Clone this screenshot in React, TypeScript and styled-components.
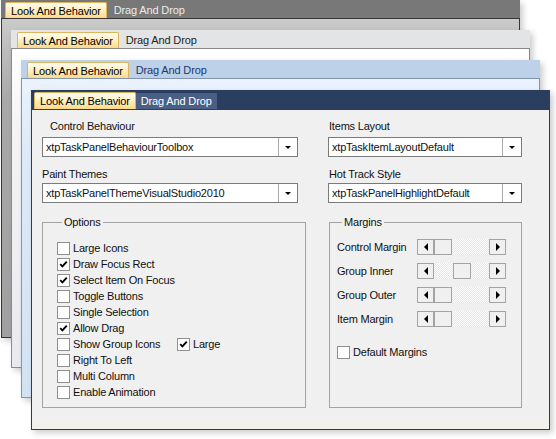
import React from "react";
import styled, { createGlobalStyle } from "styled-components";

type Skin = "graphite" | "silver" | "azure" | "navy";

const skins: Record<
  Skin,
  {
    strip: string;
    stripH: number;
    inset: number;
    tabH: number;
    idle: string;
    idleBg: string;
    idlePad: number;
    frame: string;
    top: string;
    body: string;
  }
> = {
  graphite: {
    strip: "#787878",
    stripH: 18,
    inset: 4,
    tabH: 16,
    idle: "#ececec",
    idleBg: "transparent",
    idlePad: 7,
    frame: "#363636",
    top: "#363636",
    body: "linear-gradient(180deg, #cacaca 0px, #a9a9a9 80px, #a0a0a0 100%)",
  },
  silver: {
    strip: "#e3e4e6",
    stripH: 18,
    inset: 6,
    tabH: 16,
    idle: "#1e1e1e",
    idleBg: "transparent",
    idlePad: 7,
    frame: "#8a8a8a",
    top: "#8a8a8a",
    body: "linear-gradient(180deg, #ffffff 0px, #f3f4f6 80px, #e8eaed 100%)",
  },
  azure: {
    strip: "#bdd1e9",
    stripH: 18,
    inset: 6,
    tabH: 16,
    idle: "#1b3a6a",
    idleBg: "transparent",
    idlePad: 7,
    frame: "#8195b1",
    top: "#8195b1",
    body: "linear-gradient(180deg, #eaf3fd 0px, #dde9f7 80px, #d3e2f3 100%)",
  },
  navy: {
    strip: "#2a3e60",
    stripH: 19,
    inset: 3,
    tabH: 17,
    idle: "#ffffff",
    idleBg: "#4a5f83",
    idlePad: 5,
    frame: "#3a3a3a",
    top: "#2a3e60",
    body: "linear-gradient(180deg, #f0f0f0 0px, #f0f0f0 308px, #f3f1e8 100%)",
  },
};

const GlobalStyle = createGlobalStyle`
  html, body {
    margin: 0;
    padding: 0;
    background: #ffffff;
  }
  body {
    font-family: "Liberation Sans", Arial, sans-serif;
    font-size: 11px;
    color: #111111;
  }
  * {
    box-sizing: border-box;
  }
`;

const Desktop = styled.div`
  position: relative;
  width: 556px;
  height: 439px;
  overflow: hidden;
  background: #ffffff;
`;

const Window = styled.section<{ $x: number; $y: number; $h: number }>`
  position: absolute;
  left: ${(p) => p.$x}px;
  top: ${(p) => p.$y}px;
  width: 519px;
  height: ${(p) => p.$h}px;
  display: flex;
  flex-direction: column;
  box-shadow: 3px 3px 6px rgba(0, 0, 0, 0.2);
`;

const TabStrip = styled.div<{ $skin: Skin }>`
  display: flex;
  align-items: flex-end;
  height: ${(p) => skins[p.$skin].stripH}px;
  padding-left: ${(p) => skins[p.$skin].inset}px;
  background: ${(p) => skins[p.$skin].strip};
`;

const Tab = styled.div<{ $skin: Skin; $active?: boolean }>`
  height: ${(p) => (p.$active ? skins[p.$skin].tabH : 16)}px;
  line-height: ${(p) => (p.$active ? skins[p.$skin].tabH : 16)}px;
  padding: 0 ${(p) => (p.$active ? 5 : skins[p.$skin].idlePad)}px;
  letter-spacing: -0.15px;
  white-space: nowrap;
  color: ${(p) => (p.$active ? "#000000" : skins[p.$skin].idle)};
  background: ${(p) =>
    p.$active
      ? "linear-gradient(180deg, #fffdf2 0%, #fff1c4 45%, #fdd98a 100%)"
      : skins[p.$skin].idleBg};
  border: ${(p) => (p.$active ? "1px solid #dcb55e" : "none")};
  border-bottom: none;
  border-radius: ${(p) => (p.$active ? "2px 2px 0 0" : "0")};
`;

const Body = styled.div<{ $skin: Skin }>`
  flex: 1;
  background: ${(p) => skins[p.$skin].body};
  border: 1px solid ${(p) => skins[p.$skin].frame};
  border-top-color: ${(p) => skins[p.$skin].top};
`;

const Panel = styled(Body)`
  display: grid;
  grid-template-columns: 264px 194px;
  column-gap: 22px;
  align-items: start;
  padding: 9px 0 0 10px;
`;

const Column = styled.div`
  display: flex;
  flex-direction: column;
`;

const FieldLabel = styled.div<{ $indent?: number; $above?: number; $below: number }>`
  height: 14px;
  line-height: 14px;
  padding-left: ${(p) => p.$indent ?? 0}px;
  margin-top: ${(p) => p.$above ?? 0}px;
  margin-bottom: ${(p) => p.$below}px;
  letter-spacing: -0.2px;
  white-space: nowrap;
`;

const Combo = styled.div<{ $width: number }>`
  display: flex;
  width: ${(p) => p.$width}px;
  height: 20px;
  border: 1px solid #7b7b7b;
  background: #ffffff;
`;

const ComboText = styled.div`
  flex: 1;
  padding-left: 3px;
  line-height: 18px;
  letter-spacing: -0.2px;
  white-space: nowrap;
  overflow: hidden;
`;

const ComboButton = styled.div`
  width: 19px;
  border-left: 1px solid #a9a9a9;
  display: flex;
  align-items: center;
  justify-content: center;

  &::after {
    content: "";
    border-left: 3px solid transparent;
    border-right: 3px solid transparent;
    border-top: 3px solid #000000;
  }
`;

const GroupBox = styled.fieldset<{ $width: number; $shift?: number; $padTop: number; $padLeft: number }>`
  width: ${(p) => p.$width}px;
  height: 193px;
  margin: 12px 0 0 ${(p) => p.$shift ?? 0}px;
  padding: ${(p) => p.$padTop}px 0 0 ${(p) => p.$padLeft}px;
  border: 1px solid #a3a3a3;
  min-width: 0;
`;

const GroupTitle = styled.legend`
  margin-left: 5px;
  padding: 0 2px;
  height: 14px;
  line-height: 14px;
  letter-spacing: -0.2px;
`;

const CheckRow = styled.div<{ $above?: number }>`
  display: flex;
  align-items: center;
  height: 16px;
  margin-top: ${(p) => p.$above ?? 0}px;
`;

const CheckItem = styled.label<{ $width?: number }>`
  display: flex;
  align-items: center;
  width: ${(p) => (p.$width ? `${p.$width}px` : "auto")};
  white-space: nowrap;
  letter-spacing: -0.2px;
`;

const Box = styled.span`
  width: 13px;
  height: 13px;
  margin-right: 3px;
  border: 1px solid #8f8f8f;
  background: #ffffff;
  display: flex;
  align-items: center;
  justify-content: center;
`;

const MarginRow = styled.div`
  display: grid;
  grid-template-columns: 80px 89px;
  align-items: center;
  height: 24px;
  letter-spacing: -0.2px;
  white-space: nowrap;
`;

const ScrollBar = styled.div`
  display: flex;
  height: 16px;
`;

const ArrowButton = styled.div<{ $dir: "left" | "right" }>`
  width: 17px;
  height: 16px;
  border: 1px solid #a3a3a3;
  background: #f0f0f0;
  display: flex;
  align-items: center;
  justify-content: center;

  &::after {
    content: "";
    border-top: 4px solid transparent;
    border-bottom: 4px solid transparent;
    ${(p) =>
      p.$dir === "left"
        ? "border-right: 4px solid #000000;"
        : "border-left: 4px solid #000000; margin-left: 1px;"}
  }
`;

const Track = styled.div`
  flex: 1;
  display: flex;
  background: repeating-conic-gradient(#ffffff 0 25%, #e6e6e6 0 50%) 0 0 / 2px 2px;
`;

const Thumb = styled.div<{ $offset: number }>`
  width: 18px;
  height: 16px;
  margin-left: ${(p) => p.$offset}px;
  border: 1px solid #a3a3a3;
  background: #f0f0f0;
`;

const Tick = () => (
  <svg width="9" height="9" viewBox="0 0 9 9">
    <path d="M1.2 4.2 L3.4 6.4 L7.8 1.6" fill="none" stroke="#000" strokeWidth="1.9" />
  </svg>
);

const Check = ({ label, checked, width }: { label: string; checked?: boolean; width?: number }) => (
  <CheckItem $width={width}>
    <Box>{checked && <Tick />}</Box>
    {label}
  </CheckItem>
);

const Tabs = ({ skin }: { skin: Skin }) => (
  <TabStrip $skin={skin}>
    <Tab $skin={skin} $active>
      Look And Behavior
    </Tab>
    <Tab $skin={skin}>Drag And Drop</Tab>
  </TabStrip>
);

const options: { label: string; checked?: boolean }[] = [
  { label: "Large Icons" },
  { label: "Draw Focus Rect", checked: true },
  { label: "Select Item On Focus", checked: true },
  { label: "Toggle Buttons" },
  { label: "Single Selection" },
  { label: "Allow Drag", checked: true },
];

const trailing = ["Right To Left", "Multi Column", "Enable Animation"];

const margins = [
  { label: "Control Margin", pos: 0 },
  { label: "Group Inner", pos: 19 },
  { label: "Group Outer", pos: 0 },
  { label: "Item Margin", pos: 0 },
];

const backs: { skin: Skin; x: number; y: number }[] = [
  { skin: "graphite", x: 1, y: 0 },
  { skin: "silver", x: 11, y: 30 },
  { skin: "azure", x: 21, y: 60 },
];

export default function App() {
  return (
    <>
      <GlobalStyle />
      <Desktop>
        {backs.map((w) => (
          <Window key={w.skin} $x={w.x} $y={w.y} $h={338}>
            <Tabs skin={w.skin} />
            <Body $skin={w.skin} />
          </Window>
        ))}

        <Window $x={31} $y={90} $h={340}>
          <Tabs skin="navy" />
          <Panel $skin="navy">
            <Column>
              <FieldLabel $indent={8} $below={4}>
                Control Behaviour
              </FieldLabel>
              <Combo $width={256}>
                <ComboText>xtpTaskPanelBehaviourToolbox</ComboText>
                <ComboButton />
              </Combo>
              <FieldLabel $above={10} $below={2}>
                Paint Themes
              </FieldLabel>
              <Combo $width={256}>
                <ComboText>xtpTaskPanelThemeVisualStudio2010</ComboText>
                <ComboButton />
              </Combo>
              <GroupBox $width={264} $padTop={11} $padLeft={14}>
                <GroupTitle>Options</GroupTitle>
                {options.map((o) => (
                  <CheckRow key={o.label}>
                    <Check label={o.label} checked={o.checked} />
                  </CheckRow>
                ))}
                <CheckRow>
                  <Check label="Show Group Icons" width={120} />
                  <Check label="Large" checked />
                </CheckRow>
                {trailing.map((t) => (
                  <CheckRow key={t}>
                    <Check label={t} />
                  </CheckRow>
                ))}
              </GroupBox>
            </Column>

            <Column>
              <FieldLabel $indent={1} $below={4}>
                Items Layout
              </FieldLabel>
              <Combo $width={194}>
                <ComboText>xtpTaskItemLayoutDefault</ComboText>
                <ComboButton />
              </Combo>
              <FieldLabel $indent={1} $above={10} $below={2}>
                Hot Track Style
              </FieldLabel>
              <Combo $width={194}>
                <ComboText>xtpTaskPanelHighlightDefault</ComboText>
                <ComboButton />
              </Combo>
              <GroupBox $width={193} $shift={1} $padTop={6} $padLeft={7}>
                <GroupTitle>Margins</GroupTitle>
                {margins.map((m) => (
                  <MarginRow key={m.label}>
                    {m.label}
                    <ScrollBar>
                      <ArrowButton $dir="left" />
                      <Track>
                        <Thumb $offset={m.pos} />
                      </Track>
                      <ArrowButton $dir="right" />
                    </ScrollBar>
                  </MarginRow>
                ))}
                <CheckRow $above={13}>
                  <Check label="Default Margins" />
                </CheckRow>
              </GroupBox>
            </Column>
          </Panel>
        </Window>
      </Desktop>
    </>
  );
}
